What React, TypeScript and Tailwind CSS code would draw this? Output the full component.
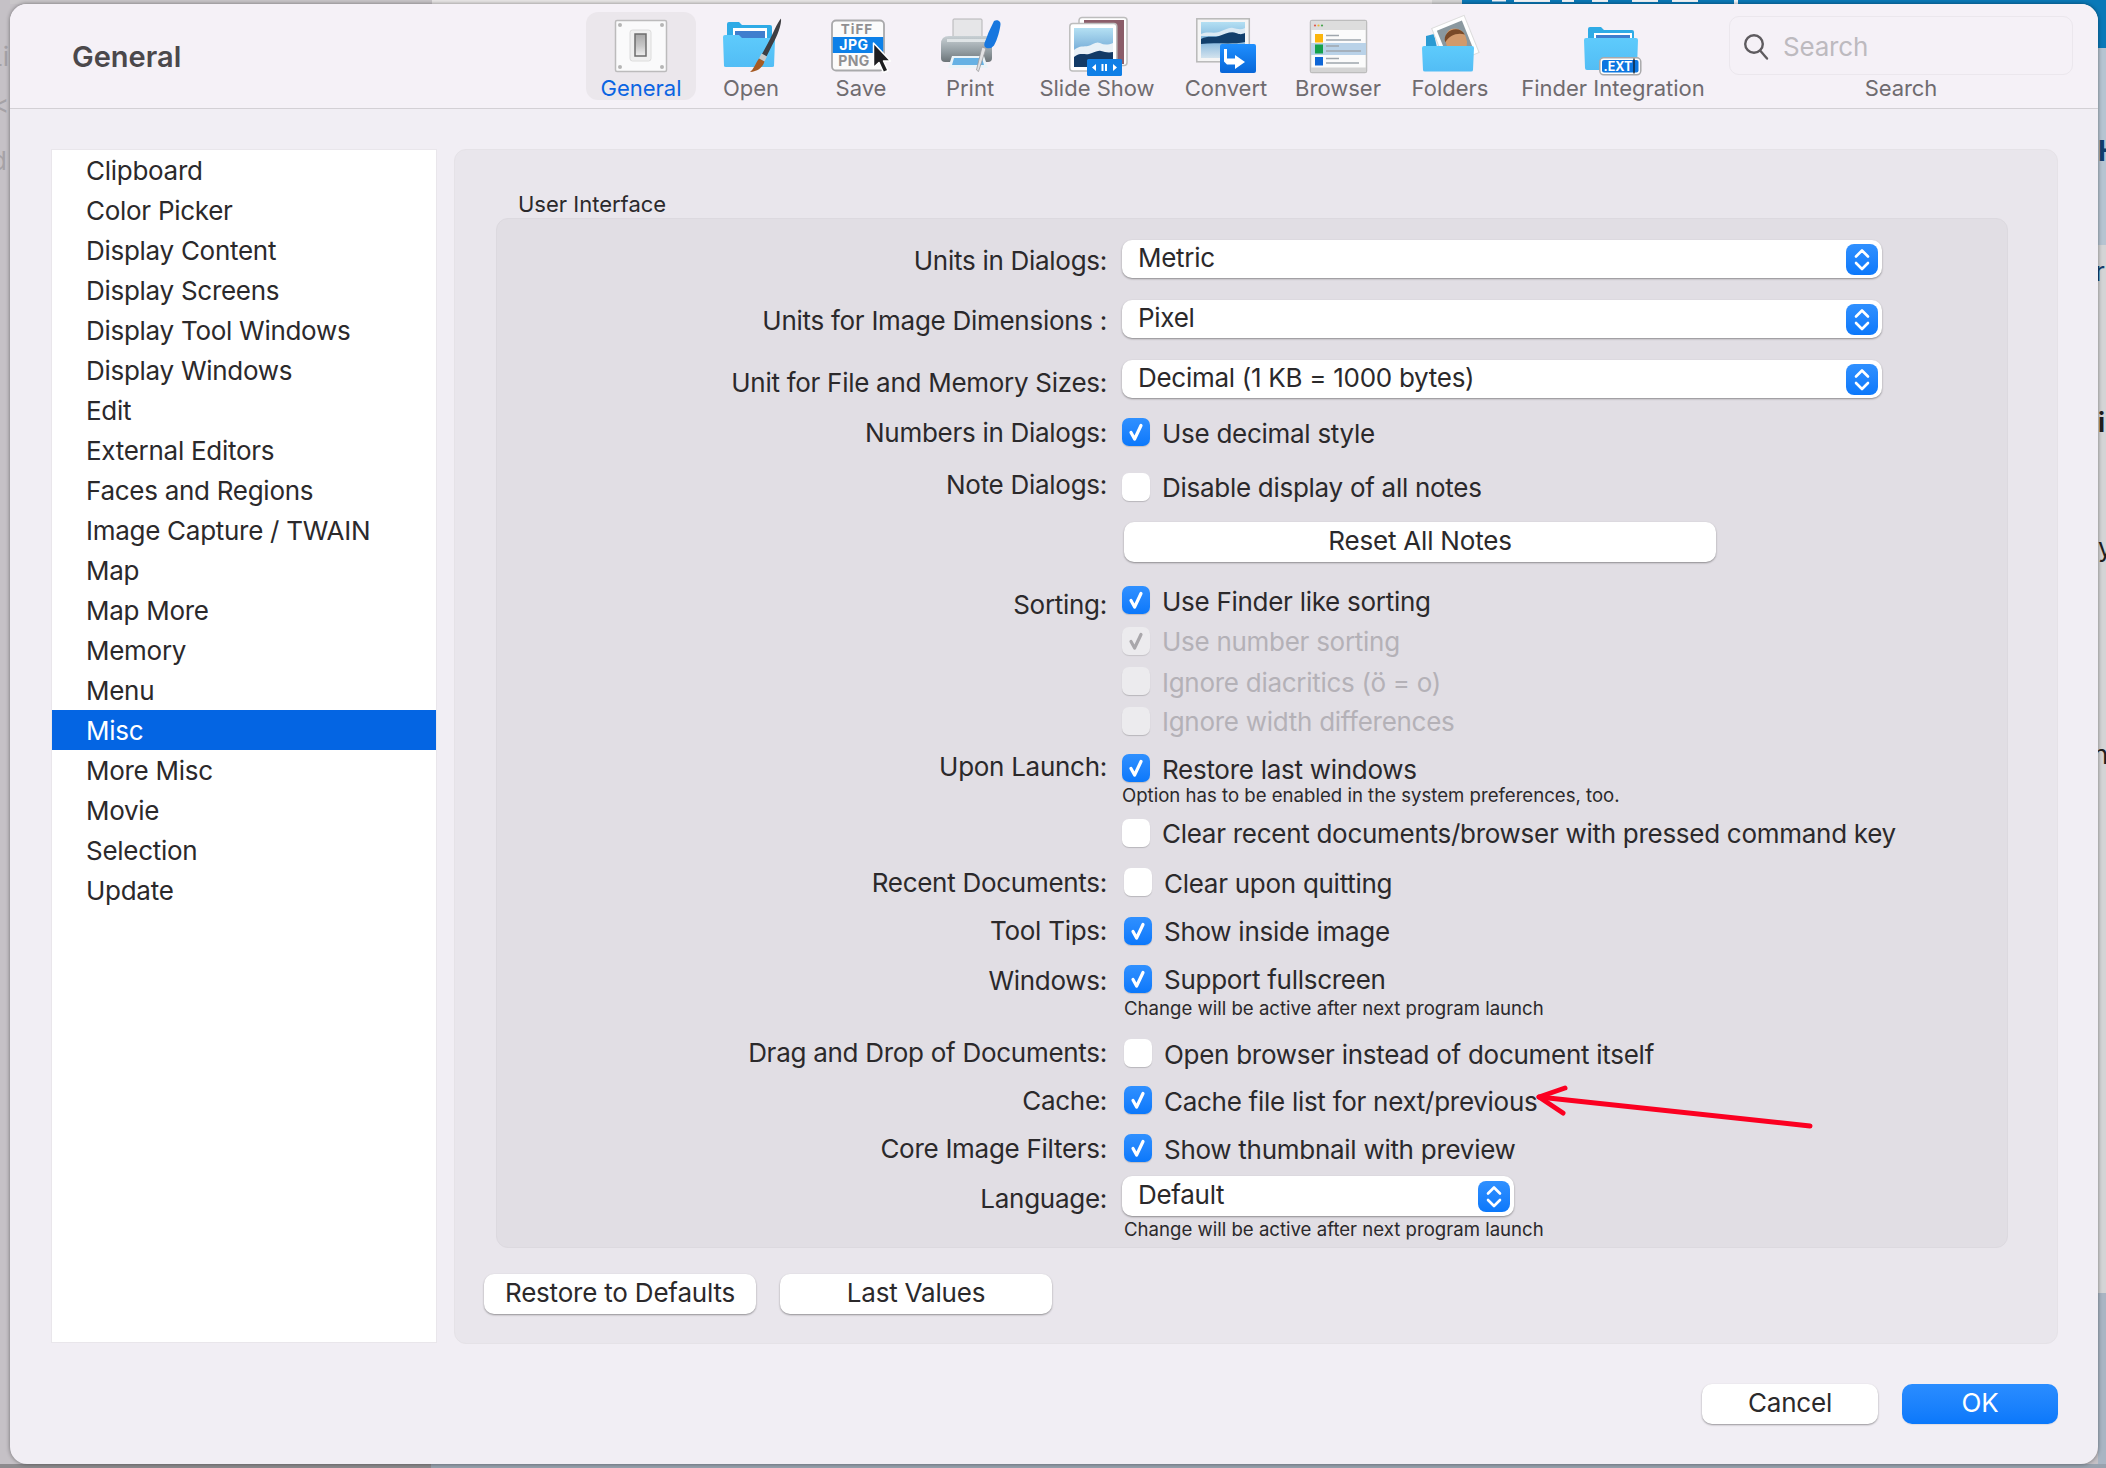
import React from "react";

const font = "font-['Inter','Liberation_Sans',sans-serif]";

function Stepper() {
  return (
    <span className="flex h-[31px] w-[32px] items-center justify-center rounded-[8px] bg-gradient-to-b from-[#2f90ff] to-[#0a78fb]">
      <svg width="32" height="31" viewBox="0 0 32 31" fill="none" stroke="#fff" strokeWidth="2.6" strokeLinecap="round" strokeLinejoin="round">
        <path d="M10 12.5 16 6.5 22 12.5" />
        <path d="M10 19 16 25 22 19" />
      </svg>
    </span>
  );
}

function Select({ text, w, h }: { text: string; w: string; h: string }) {
  return (
    <div className={`flex ${w} ${h} items-center justify-between rounded-[10px] bg-white pl-[16px] pr-[4px] shadow-[0_1px_2px_rgba(0,0,0,0.38)]`}>
      <span className="-mt-[2px] text-[26px] leading-[34px] tracking-[-0.28px] text-[#2b292b]">{text}</span>
      <Stepper />
    </div>
  );
}

type CheckState = "on" | "off" | "dim-on" | "dim-off";

function Check({ state }: { state: CheckState }) {
  if (state === "on") {
    return (
      <span className="flex h-[28px] w-[28px] shrink-0 items-center justify-center rounded-[7px] bg-gradient-to-b from-[#2f90ff] to-[#0a78fb] shadow-[0_1px_1px_rgba(0,0,0,0.15)]">
        <svg width="28" height="28" viewBox="0 0 28 28" fill="none" stroke="#fff" strokeWidth="3.2" strokeLinecap="round" strokeLinejoin="round">
          <path d="M9 14.5 12.6 21 19 7.5" />
        </svg>
      </span>
    );
  }
  if (state === "dim-on") {
    return (
      <span className="flex h-[28px] w-[28px] shrink-0 items-center justify-center rounded-[7px] bg-[#ecebee] shadow-[0_1px_1px_rgba(0,0,0,0.12)]">
        <svg width="28" height="28" viewBox="0 0 28 28" fill="none" stroke="#a9a7ab" strokeWidth="3.2" strokeLinecap="round" strokeLinejoin="round">
          <path d="M9 14.5 12.6 21 19 7.5" />
        </svg>
      </span>
    );
  }
  return <span className={`block h-[28px] w-[28px] shrink-0 rounded-[7px] shadow-[0_1px_1px_rgba(0,0,0,0.18)] ${state === "off" ? "bg-white" : "bg-[#ecebee]"}`} />;
}

function Row({ h, label, offset, children }: { h: string; label?: string; offset?: string; children: React.ReactNode }) {
  return (
    <div className={`flex ${h} items-start gap-[15px]`}>
      <div className={`w-[610px] shrink-0 text-right text-[26px] leading-[32px] tracking-[-0.28px] text-[#2b292b] ${offset ?? ""}`}>{label}</div>
      <div className="min-w-0">{children}</div>
    </div>
  );
}

function Opt({ state, text, shift, up }: { state: CheckState; text: string; shift?: boolean; up?: boolean }) {
  const dim = state.startsWith("dim");
  return (
    <div className={`flex items-start gap-[12px] ${shift ? "ml-[2px]" : ""}`}>
      <Check state={state} />
      <span className={`whitespace-nowrap text-[26px] leading-[32px] tracking-[-0.28px] ${up ? "-mt-[1px]" : ""} ${dim ? "text-[#b4b1b7]" : "text-[#2b292b]"}`}>{text}</span>
    </div>
  );
}

function Btn({ children, w, primary }: { children: React.ReactNode; w: string; primary?: boolean }) {
  return (
    <div
      className={`flex h-[40px] ${w} items-center justify-center rounded-[10px] pb-[2px] text-[26px] leading-[32px] tracking-[-0.2px] ${
        primary
          ? "bg-gradient-to-b from-[#2a8dff] to-[#0a78fb] text-white shadow-[0_1px_1px_rgba(0,0,0,0.08)]"
          : "bg-white text-[#2b292b] shadow-[0_1px_2px_rgba(0,0,0,0.38)]"
      }`}
    >
      {children}
    </div>
  );
}

function Sky({ id, x, y, w, h }: { id: string; x: number; y: number; w: number; h: number }) {
  return (
    <g>
      <defs>
        <linearGradient id={id} x1="0" y1="0" x2="0" y2="1">
          <stop offset="0" stopColor="#b4e0f3" />
          <stop offset="0.5" stopColor="#7fb4dc" />
          <stop offset="1" stopColor="#d3e3ee" />
        </linearGradient>
      </defs>
      <rect x={x} y={y} width={w} height={h} fill={`url(#${id})`} />
    </g>
  );
}

const IconGeneral = () => (
  <svg width="64" height="62" viewBox="0 0 64 62" className="overflow-visible">
    <defs>
      <linearGradient id="sw" x1="0" y1="0" x2="0" y2="1">
        <stop offset="0" stopColor="#a8a8a8" />
        <stop offset="0.55" stopColor="#c8c8c8" />
        <stop offset="1" stopColor="#f0f0f0" />
      </linearGradient>
    </defs>
    <rect x="6.5" y="6.5" width="51" height="51" rx="1.5" fill="#fafafb" stroke="#bcbbbc" strokeWidth="1.5" />
    {[[11, 11], [53, 11], [11, 53], [53, 53]].map(([cx, cy]) => (
      <circle key={`${cx}-${cy}`} cx={cx} cy={cy} r="2" fill="#b5b5b5" />
    ))}
    <rect x="21" y="16" width="21" height="31" rx="2.5" fill="#f1f1f1" stroke="#dcdcdc" />
    <rect x="26" y="20" width="11" height="22" fill="url(#sw)" stroke="#6d6d6d" strokeWidth="1.5" />
  </svg>
);

const FolderFront = ({ id, d }: { id: string; d: string }) => (
  <>
    <defs>
      <linearGradient id={id} x1="0" y1="0" x2="0" y2="1">
        <stop offset="0" stopColor="#5ecbfc" />
        <stop offset="1" stopColor="#52bdf5" />
      </linearGradient>
    </defs>
    <path d={d} fill={`url(#${id})`} />
  </>
);

const IconOpen = () => (
  <svg width="64" height="62" viewBox="0 0 64 62" className="overflow-visible">
    <path d="M8 10q0-2 2-2h10l3 3h28q2 0 2 2v28H8z" fill="#2fabe6" />
    <rect x="14" y="14" width="34" height="14" fill="#fff" />
    <rect x="16" y="17" width="30" height="12" fill="#3f7ece" />
    <FolderFront id="of" d="M4 23q0-2 2-2h14l3 3h31q2 0 2 2l-1 26q0 1-2 1H7q-2 0-2-1z" />
    <path d="M62 4.500c.8 6-3.500 17-9 27l-5.500 11-4.500-2.500 6-11c5-9 9-20 13-24.500z" fill="#3e3e42" />
    <path d="M42.500 39.500 48 42.500 45.500 47.500 40 44.500z" fill="#c9c9c9" />
    <path d="M40 44.500 45.500 47.500C44 53 39 57.500 31 58c4-3 5-8 9-13.500z" fill="#a65a22" />
  </svg>
);

const IconSave = () => (
  <svg width="64" height="62" viewBox="0 0 64 62" className="overflow-visible">
    <rect x="3" y="6.500" width="52" height="50" rx="4" fill="#fbfbfb" stroke="#a9a9ab" strokeWidth="1.800" />
    <rect x="3.800" y="23" width="50.400" height="16" fill="#0c80e8" />
    <text x="28" y="20" textAnchor="middle" fontFamily="Inter, sans-serif" fontSize="13.500" fontWeight="700" letterSpacing="1" fill="#8f8f91">TiFF</text>
    <text x="25" y="36" textAnchor="middle" fontFamily="Inter, sans-serif" fontSize="14" fontWeight="700" letterSpacing="0.500" fill="#fff">JPG</text>
    <text x="25" y="52" textAnchor="middle" fontFamily="Inter, sans-serif" fontSize="14" fontWeight="700" letterSpacing="0.500" fill="#8f8f91">PNG</text>
    <path d="M44.500 29V53.500L50 48.500 54.500 58.500 59 56.500 54.500 47H61.500z" fill="#1d1d20" stroke="#fff" strokeWidth="1.500" strokeLinejoin="round" />
  </svg>
);

const IconPrint = () => (
  <svg width="64" height="62" viewBox="0 0 64 62" className="overflow-visible">
    <defs>
      <linearGradient id="pr" x1="0" y1="0" x2="0" y2="1">
        <stop offset="0" stopColor="#c8d0d4" />
        <stop offset="0.6" stopColor="#929ca1" />
        <stop offset="1" stopColor="#6c7478" />
      </linearGradient>
    </defs>
    <rect x="15" y="5" width="29" height="22" rx="1" fill="#e6e6e8" stroke="#b4b4b6" />
    <path d="M3 30q0-8 8-8h37q6 0 6 8v14q0 4-4 4H7q-4 0-4-4z" fill="url(#pr)" />
    <rect x="9" y="25" width="41" height="3" fill="#dfe4e6" />
    <path d="M14 42h32l4 12H10z" fill="#eaf3f8" />
    <path d="M16 44h28l2 7H14z" fill="#66b1e4" />
    <path d="M44 33 38.500 56l2 1.500 7.500-23z" fill="#e2e2e4" stroke="#9b9b9d" strokeWidth="0.800" />
    <path d="M56 7c3-2 7 0 6.500 3.500-.5 5-3 15-6.500 21q-2.500 3.500-7.500 2.500-3-1-2-5 2-5 4-10.500z" fill="#1777df" />
  </svg>
);

const IconSlide = () => (
  <svg width="64" height="62" viewBox="0 0 64 62" className="overflow-visible">
    <rect x="14" y="3.500" width="48" height="48" rx="3" fill="#fff" stroke="#bdbdbd" strokeWidth="1.500" />
    <rect x="19" y="6" width="40" height="44" fill="#8b5d69" />
    <rect x="4.800" y="9.500" width="47" height="47.500" rx="3" fill="#fff" stroke="#bdbdbd" strokeWidth="1.500" />
    <Sky id="sk1" x={9} y={14} w={39} h={39} />
    <path d="M9 36c6-5 10-3 14-4s8-5 12-3 8 2 13 0v24H9z" fill="#e9f1f7" />
    <path d="M9 43c6-5 10-2 15-3s8-4 12-3 7 2 12 1v15H9z" fill="#123a66" />
    <rect x="22" y="45" width="35" height="17" rx="1.500" fill="#0f7fe6" />
    <path d="M27 53.500 31 50v7zM52 53.500 48 50v7z" fill="#fff" />
    <path d="M37.500 50v7M41 50v7" stroke="#fff" strokeWidth="2" />
  </svg>
);

const IconConvert = () => (
  <svg width="64" height="62" viewBox="0 0 64 62" className="overflow-visible">
    <defs>
      <linearGradient id="cb" x1="0" y1="0" x2="0" y2="1">
        <stop offset="0" stopColor="#1f8fff" />
        <stop offset="1" stopColor="#0766d8" />
      </linearGradient>
    </defs>
    <rect x="2.800" y="4.800" width="52.500" height="43" fill="#f5f5f5" stroke="#b8b8b8" strokeWidth="1.500" />
    <Sky id="sk2" x={7} y={8} w={44} h={36} />
    <path d="M7 20c7-3 12 0 18-2s10-5 14-4 8 2 12 0v8H7z" fill="#dbe9f3" />
    <path d="M7 25c7-4 12-1 18-3s12-5 17-3 6 1 9 0v9c-14 3-30 0-44 2z" fill="#123f6c" />
    <rect x="26" y="30" width="36" height="29" rx="2" fill="url(#cb)" />
    <path d="M33 35v9.500h8V41l10 7-10 7v-4.500H33l-3-3V35z" fill="#fff" />
  </svg>
);

const IconBrowser = () => (
  <svg width="64" height="62" viewBox="0 0 64 62" className="overflow-visible">
    <rect x="4.500" y="6.500" width="56" height="52" rx="1.500" fill="#fbfbfb" stroke="#bdbdbd" strokeWidth="1.500" />
    <rect x="5" y="7" width="55" height="9" fill="#dddddd" />
    <circle cx="9" cy="11.500" r="1.100" fill="#e2574c" />
    <circle cx="12.500" cy="11.500" r="1.100" fill="#e9b93a" />
    <circle cx="16" cy="11.500" r="1.100" fill="#4aa64e" />
    <rect x="5" y="29" width="55" height="12" fill="#b9d2e8" />
    <rect x="9" y="20" width="8" height="8.500" fill="#fbb50c" />
    <rect x="9" y="30.500" width="8" height="9" fill="#13a14b" />
    <rect x="9" y="43" width="8" height="8.500" fill="#0e66d6" />
    <path d="M20 21.500h13M20 26h35M20 32h13M20 37h35M20 44.500h13M20 49h33" stroke="#9fa6ad" strokeWidth="1.300" />
    <rect x="5" y="53.500" width="55" height="4.500" fill="#d4d4d4" />
  </svg>
);

const IconFolders = () => (
  <svg width="64" height="62" viewBox="0 0 64 62" className="overflow-visible">
    <path d="M8 22l8-2 4 18H8z" fill="#2b9ad2" />
    <g transform="rotate(-22 38 24)">
      <rect x="19" y="6" width="35" height="40" fill="#fff" stroke="#dcdcdc" />
      <rect x="23" y="10" width="27" height="28" fill="#8a989f" />
      <ellipse cx="37" cy="27" rx="10.500" ry="13" fill="#d29a6c" />
      <path d="M26.500 24c0-11 19-13 21 0-6-5-15-5-21 0z" fill="#7a4a28" />
    </g>
    <FolderFront id="ff" d="M4 34q0-2 2-2h48q2 0 2 2l-1 22q0 1.500-2 1.500H7q-2 0-2-1.500z" />
  </svg>
);

const IconFinder = () => (
  <svg width="64" height="62" viewBox="0 0 64 62" className="overflow-visible">
    <path d="M7 15q0-2 2-2h11l3 3h28q2 0 2 2v24H7z" fill="#2fabe6" />
    <rect x="13" y="19" width="38" height="14" fill="#fff" />
    <rect x="15" y="21" width="34" height="12" fill="#3f7ece" />
    <FolderFront id="fi" d="M3 26q0-2 2-2h50q2 0 2 2l-1 28q0 2-2 2H6q-2 0-2-2z" />
    <rect x="18.800" y="43.800" width="41" height="17" rx="4" fill="#fff" stroke="#a9a9ab" strokeWidth="1.500" />
    <rect x="21" y="46" width="36.500" height="12.500" rx="2" fill="#0d76e0" />
    <text x="37" y="56.500" textAnchor="middle" fontFamily="Inter, sans-serif" fontSize="12.500" fontWeight="700" fill="#fff">.EXT</text>
    <path d="M53 44.500v15" stroke="#111" strokeWidth="1.200" />
  </svg>
);

const tools: { label: string; w: string; Icon: () => React.ReactElement; active?: boolean }[] = [
  { label: "General", w: "w-[110px]", Icon: IconGeneral, active: true },
  { label: "Open", w: "w-[110px]", Icon: IconOpen },
  { label: "Save", w: "w-[110px]", Icon: IconSave },
  { label: "Print", w: "w-[108px]", Icon: IconPrint },
  { label: "Slide Show", w: "w-[146px]", Icon: IconSlide },
  { label: "Convert", w: "w-[112px]", Icon: IconConvert },
  { label: "Browser", w: "w-[112px]", Icon: IconBrowser },
  { label: "Folders", w: "w-[112px]", Icon: IconFolders },
  { label: "Finder Integration", w: "w-[214px]", Icon: IconFinder },
];

const list = [
  "Clipboard", "Color Picker", "Display Content", "Display Screens", "Display Tool Windows", "Display Windows", "Edit",
  "External Editors", "Faces and Regions", "Image Capture / TWAIN", "Map", "Map More", "Memory", "Menu", "Misc",
  "More Misc", "Movie", "Selection", "Update",
];

function Backdrop() {
  return (
    <>
      <div className="absolute left-0 top-0 h-[4px] w-[432px] bg-[#c9c6c9]" />
      <div className="absolute left-[432px] top-0 h-[4px] w-[1000px] bg-[#e9e7e7]" />
      <div className="absolute left-[1432px] top-0 h-[4px] w-[30px] bg-[#d6d6d6]" />
      <div className="absolute left-[1462px] top-0 h-[48px] w-[644px] bg-[#0a79b8]" />
      <svg className="absolute left-[1462px] top-0" width="400" height="4" viewBox="0 0 400 4" fill="#f2f6f9">
        <path d="M30 0h14v1.500H30zM52 0h36v2H52zM100 0h12v2h-12zM130 0h16v2h-16zM170 0h26v2h-26zM210 0h26v2h-26zM272 0h4v4h-4z" />
      </svg>
      <div className="absolute left-0 top-0 h-[1468px] w-[10px] overflow-hidden bg-[#c5c1c6] text-[26px] leading-[30px] text-[#a5a2a6]">
        <span className="absolute left-[-12px] top-[42px]">Li</span>
        <span className="absolute left-[-8px] top-[90px]">&lt;</span>
        <span className="absolute left-[-9px] top-[146px]">d</span>
      </div>
      <div className="absolute left-[2098px] top-[48px] h-[197px] w-[8px] overflow-hidden bg-[#b6c4d1]">
        <span className="absolute left-0 top-[88px] text-[28px] font-bold leading-[30px] text-[#123f6d]">H</span>
      </div>
      <div className="absolute left-[2098px] top-[245px] h-[1048px] w-[8px] overflow-hidden bg-[#d4d4d5] text-[26px] leading-[30px] text-[#1f1f1f]">
        <span className="absolute left-[-3px] top-[12px] text-[#123f6d]">r</span>
        <span className="absolute left-0 top-[163px] font-bold">i</span>
        <span className="absolute left-0 top-[288px]">y</span>
        <span className="absolute left-[-5px] top-[495px]">n</span>
      </div>
      <div className="absolute left-[2098px] top-[1293px] h-[175px] w-[8px] bg-[#a9b5c3]" />
      <div className="absolute left-0 top-[1464px] h-[4px] w-[431px] bg-[#8d8b8e]" />
      <div className="absolute left-[431px] top-[1464px] h-[4px] w-[1675px] bg-[#98a2ae]" />
    </>
  );
}

export default function App() {
  const small = "whitespace-nowrap text-[18.6px] leading-[18px] text-[#2b292b]";
  return (
    <div className={`relative h-[1468px] w-[2106px] overflow-hidden bg-[#c5c1c6] ${font}`}>
      <Backdrop />
      <div className="relative ml-[10px] mt-[4px] flex h-[1460px] w-[2088px] flex-col rounded-[17px] bg-[#f1eef4] shadow-[0_0_4px_rgba(0,0,0,0.45)]">
        {/* Header */}
        <div className="flex h-[105px] shrink-0 items-start rounded-t-[17px] border-b border-[#d3d0d5] bg-[#f5f1f7]">
          <div className="flex h-[103px] w-[576px] shrink-0 items-start pl-[62px] pt-[35px] text-[29px] font-semibold leading-[36px] text-[#4b484b]">
            General
          </div>
          {tools.map(({ label, w, Icon, active }) => (
            <div
              key={label}
              className={`mt-[8px] flex h-[88px] ${w} shrink-0 flex-col items-center rounded-[12px] pt-[2px] ${active ? "bg-[#ebe7ec]" : ""}`}
            >
              <div className="flex h-[62px] w-[64px] justify-center">
                <Icon />
              </div>
              <div className={`whitespace-nowrap text-[22px] leading-[24px] ${active ? "text-[#0b65e2]" : "text-[#6f6b6f]"}`}>{label}</div>
            </div>
          ))}
          <div className="ml-[9px] flex w-[344px] shrink-0 flex-col items-center pt-[12px]">
            <div className="flex h-[59px] w-full items-center gap-[13px] rounded-[10px] border border-[#ebe7ed] pl-[12px] pt-[2px]">
              <svg width="28" height="28" viewBox="0 0 28 28" fill="none" stroke="#5e5b5f" strokeWidth="2.400" strokeLinecap="round">
                <circle cx="12" cy="11" r="8.800" />
                <path d="M18.500 18 25 25.500" />
              </svg>
              <span className="text-[26px] leading-[32px] tracking-[-0.2px] text-[#bdbabf]">Search</span>
            </div>
            <div className="mt-[1px] text-[22px] leading-[24px] tracking-[-0.1px] text-[#6f6b6f]">Search</div>
          </div>
        </div>

        {/* Body */}
        <div className="flex items-start gap-[17px] pl-[41px] pt-[40px]">
          <div className="h-[1194px] w-[386px] shrink-0 border border-[#e9e6eb] bg-white">
            {list.map((item) => (
              <div
                key={item}
                className={`flex h-[40px] items-center pl-[34px] pt-[2px] text-[26px] leading-[32px] tracking-[-0.28px] ${item === "Misc" ? "bg-[#0465e3] text-white" : "text-[#2b292b]"}`}
              >
                {item}
              </div>
            ))}
          </div>

          <div className="h-[1195px] w-[1604px] shrink-0 rounded-[12px] border border-[#e5e2e7] bg-[#e9e6ec] pt-[42px]">
            <div className="ml-[63px] text-[22px] leading-[24px] text-[#2b292b]">User Interface</div>
            <div className="ml-[41px] mt-[2px] h-[1030px] w-[1512px] rounded-[12px] border border-[#dcd9df] bg-[#e1dee4] pt-[21px]">
              <Row h="h-[60px]" label="Units in Dialogs:" offset="mt-[5px]">
                <Select text="Metric" w="w-[760px]" h="h-[38px]" />
              </Row>
              <Row h="h-[60px]" label="Units for Image Dimensions :" offset="mt-[5px]">
                <Select text="Pixel" w="w-[760px]" h="h-[38px]" />
              </Row>
              <Row h="h-[58px]" label="Unit for File and Memory Sizes:" offset="mt-[7px]">
                <Select text="Decimal (1 KB = 1000 bytes)" w="w-[760px]" h="h-[38px]" />
              </Row>
              <Row h="h-[55px]" label="Numbers in Dialogs:" offset="mt-[-1px]">
                <Opt state="on" text="Use decimal style" />
              </Row>
              <Row h="h-[49px]" label="Note Dialogs:" offset="mt-[-4px]">
                <Opt state="off" up text="Disable display of all notes" />
              </Row>
              <Row h="h-[64px]">
                <div className="ml-[2px]">
                  <Btn w="w-[592px]">Reset All Notes</Btn>
                </div>
              </Row>
              <Row h="h-[41px]" label="Sorting:" offset="mt-[3px]">
                <Opt state="on" text="Use Finder like sorting" />
              </Row>
              <Row h="h-[40px]">
                <Opt state="dim-on" up text="Use number sorting" />
              </Row>
              <Row h="h-[40px]">
                <Opt state="dim-off" text="Ignore diacritics (ö = o)" />
              </Row>
              <Row h="h-[47px]">
                <Opt state="dim-off" up text="Ignore width differences" />
              </Row>
              <Row h="h-[65px]" label="Upon Launch:" offset="mt-[-3px]">
                <Opt state="on" text="Restore last windows" />
                <div className={small}>Option has to be enabled in the system preferences, too.</div>
              </Row>
              <Row h="h-[49px]">
                <Opt state="off" up text="Clear recent documents/browser with pressed command key" />
              </Row>
              <Row h="h-[49px]" label="Recent Documents:" offset="mt-[-1px]">
                <Opt state="off" shift text="Clear upon quitting" />
              </Row>
              <Row h="h-[48px]" label="Tool Tips:" offset="mt-[-2px]">
                <Opt state="on" shift up text="Show inside image" />
              </Row>
              <Row h="h-[74px]" label="Windows:" offset="mt-[0px]">
                <Opt state="on" shift up text="Support fullscreen" />
                <div className={`ml-[2px] mt-[3px] ${small}`}>Change will be active after next program launch</div>
              </Row>
              <Row h="h-[47px]" label="Drag and Drop of Documents:" offset="mt-[-2px]">
                <Opt state="off" shift text="Open browser instead of document itself" />
              </Row>
              <Row h="h-[48px]" label="Cache:" offset="mt-[-1px]">
                <Opt state="on" shift text="Cache file list for next/previous" />
              </Row>
              <Row h="h-[42px]" label="Core Image Filters:" offset="mt-[-1px]">
                <Opt state="on" shift text="Show thumbnail with preview" />
              </Row>
              <Row h="h-[64px]" label="Language:" offset="mt-[7px]">
                <Select text="Default" w="w-[392px]" h="h-[40px]" />
                <div className={`ml-[2px] mt-[4px] ${small}`}>Change will be active after next program launch</div>
              </Row>
            </div>
            <div className="ml-[29px] mt-[26px] flex gap-[24px]">
              <Btn w="w-[272px]">Restore to Defaults</Btn>
              <Btn w="w-[272px]">Last Values</Btn>
            </div>
          </div>
        </div>

        {/* Footer */}
        <div className="mt-[40px] flex justify-end gap-[24px] pr-[40px]">
          <Btn w="w-[176px]">Cancel</Btn>
          <Btn w="w-[156px]" primary>OK</Btn>
        </div>
      </div>

      {/* Annotation arrow drawn over the dialog */}
      <svg className="absolute left-[1528px] top-[1080px]" width="290" height="56" viewBox="0 0 290 56" fill="none" stroke="#fb0021" strokeLinecap="round" strokeLinejoin="round">
        <path d="M11 17 282 46" strokeWidth="5" />
        <path d="M37 8 11 17 35 33" strokeWidth="5" />
      </svg>
    </div>
  );
}
